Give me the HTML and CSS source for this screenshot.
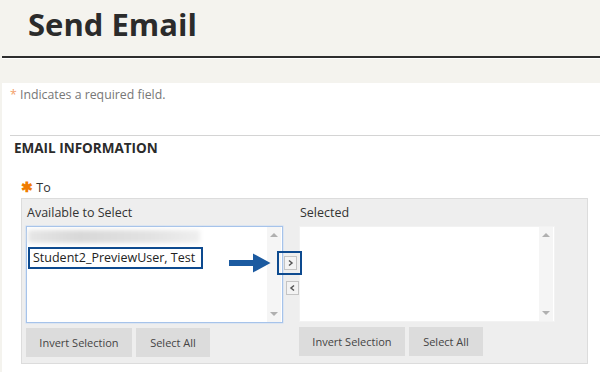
FILE: index.html
```html
<!DOCTYPE html>
<html>
<head>
<meta charset="utf-8">
<link rel="stylesheet" href="styles.css">
</head>
<body>
<header class="page-header">
  <h1 class="title">Send Email</h1>
  <div class="title-rule"></div>
</header>
<main class="content">
  <p class="req-note"><span class="req-star">*</span> Indicates a required field.</p>
  <section class="section">
    <h2 class="section-title">EMAIL INFORMATION</h2>
    <div class="field-label"><span class="star">&#10033;</span> To</div>
    <div class="picker">
      <div class="col">
        <div class="col-label">Available to Select</div>
        <div class="listbox focused">
          <div class="list-items">
            <div class="blur-row"></div>
            <div class="hl-item">Student2_PreviewUser, Test</div>
          </div>
          <div class="scroll"><span class="tri up"></span><span class="tri down"></span></div>
        </div>
        <div class="btns">
          <button class="btn">Invert Selection</button>
          <button class="btn">Select All</button>
        </div>
      </div>
      <div class="mover">
        <div class="mv-hl">
          <span class="mv-btn"><svg width="7" height="8" viewBox="0 0 7 8"><path d="M2 1.5 L5 4 L2 6.5" fill="none" stroke="#555" stroke-width="1.5"/></svg></span>
        </div>
        <span class="mv-btn"><svg width="7" height="8" viewBox="0 0 7 8"><path d="M5 1.5 L2 4 L5 6.5" fill="none" stroke="#555" stroke-width="1.5"/></svg></span>
        <svg class="arrow" width="42" height="20" viewBox="0 0 42 20"><path d="M0 7 H24 V0.5 L41.5 10 L24 19.5 V13 H0 Z" fill="#1b5aa0"/></svg>
      </div>
      <div class="col">
        <div class="col-label">Selected</div>
        <div class="listbox plain">
          <div class="list-items"></div>
          <div class="scroll"><span class="tri up"></span><span class="tri down"></span></div>
        </div>
        <div class="btns">
          <button class="btn">Invert Selection</button>
          <button class="btn">Select All</button>
        </div>
      </div>
    </div>
  </section>
</main>
</body>
</html>
```
FILE: styles.css
```css
* { box-sizing: border-box; }
html, body { margin: 0; padding: 0; }
body {
  width: 600px;
  height: 372px;
  overflow: hidden;
  background: #fff;
  font-family: "Open Sans", "Noto Sans", sans-serif;
  color: #333;
}
.page-header {
  background: #f4f3ee;
  height: 83px;
  padding-top: 3px;
}
.title {
  margin: 0 0 0 28px;
  font-size: 31px;
  font-weight: 700;
  line-height: 42px;
  color: #2b2b2b;
  letter-spacing: 0;
}
.title-rule {
  margin: 11px 0 0 2px;
  height: 2px;
  background: #2e2e2e;
  box-shadow: 0 1px 0 #fff;
}
.content {
  border-left: 2px solid #f4f3ee;
  height: 289px;
  padding-top: 1px;
}
.req-note {
  margin: 1px 0 0 8px;
  font-size: 12.3px;
  line-height: 20px;
  color: #777;
}
.req-star { color: #f3a06a; }
.section {
  margin: 30px 0 0 8px;
  border-top: 1px solid #d4d4d4;
}
.section-title {
  margin: 2px 0 0 4px;
  font-size: 13.5px;
  font-weight: 700;
  line-height: 20px;
  color: #2b2b2b;
}
.field-label {
  margin: 20px 0 0 11px;
  font-size: 12.5px;
  line-height: 18px;
  color: #333;
}
.star { color: #f07c00; font-size: 14px; font-weight: 700; }
.picker {
  margin: 1px 0 0 11px;
  width: 567px;
  height: 166px;
  background: #eee;
  border: 1px solid #dcdcdc;
  padding: 0 0 0 4px;
  display: grid;
  grid-template-columns: 257px 16px 256px;
}
.col { display: flex; flex-direction: column; }
.col-label {
  font-size: 12.5px;
  line-height: 18px;
  margin-top: 5px;
  padding-left: 1px;
  color: #333;
  height: 22px;
}
.listbox {
  height: 97px;
  display: flex;
  background: #fff;
}
.listbox.focused { border: 1px solid #a6c3ea; box-shadow: 0 0 0 0.5px #c9dbf3; }
.listbox.plain { border: 1px solid #f2f2f2; height: 96px; }
.list-items { flex: 1; padding: 2px 0 0 1px; }
.blur-row {
  width: 172px;
  height: 13px;
  margin-top: 1px;
  background: linear-gradient(90deg, #e6e6e6, #d8d8d8 30%, #e2e2e2 70%, #efefef);
  filter: blur(2px);
}
.hl-item {
  margin-top: 4px;
  width: 175px;
  height: 22px;
  border: 2px solid #0d4a8f;
  font-size: 12.5px;
  line-height: 18px;
  padding-left: 3px;
  color: #222;
}
.scroll {
  width: 14px;
  background: #f5f5f5;
  position: relative;
  margin: 0 1px 0 0;
}
.tri {
  position: absolute;
  left: 3px;
  width: 0; height: 0;
  border-left: 4px solid transparent;
  border-right: 4px solid transparent;
}
.tri.up { top: 6px; border-bottom: 4px solid #b0b0b0; }
.tri.down { bottom: 6px; border-top: 4px solid #b0b0b0; }
.btns {
  display: flex;
  gap: 4px;
  margin-top: 5px;
}
.btn {
  height: 29px;
  border: 0;
  background: #dcdcdc;
  font-family: "Open Sans", "Noto Sans", sans-serif;
  font-size: 11px;
  color: #444;
  padding: 0 13px;
}
.btn:first-child { width: 106px; }
.btn:last-child { width: 74px; }
.mover {
  position: relative;
  display: flex;
  flex-direction: column;
  align-items: center;
  padding-top: 52px;
  gap: 6px;
}
.mv-hl {
  border: 2px solid #0d4a8f;
  width: 25px;
  height: 24px;
  display: flex;
  align-items: center;
  justify-content: center;
  margin-left: -6px;
  margin-right: -3px;
  background: transparent;
}
.mv-btn {
  width: 13px;
  height: 14px;
  border: 1px solid #c4c4c4;
  background: #f3f3f3;
  display: flex;
  align-items: center;
  justify-content: center;
  margin-left: 2px;
}
.mv-hl .mv-btn { margin-left: 2px; }
.arrow {
  position: absolute;
  left: -54px;
  top: 54px;
}
```
